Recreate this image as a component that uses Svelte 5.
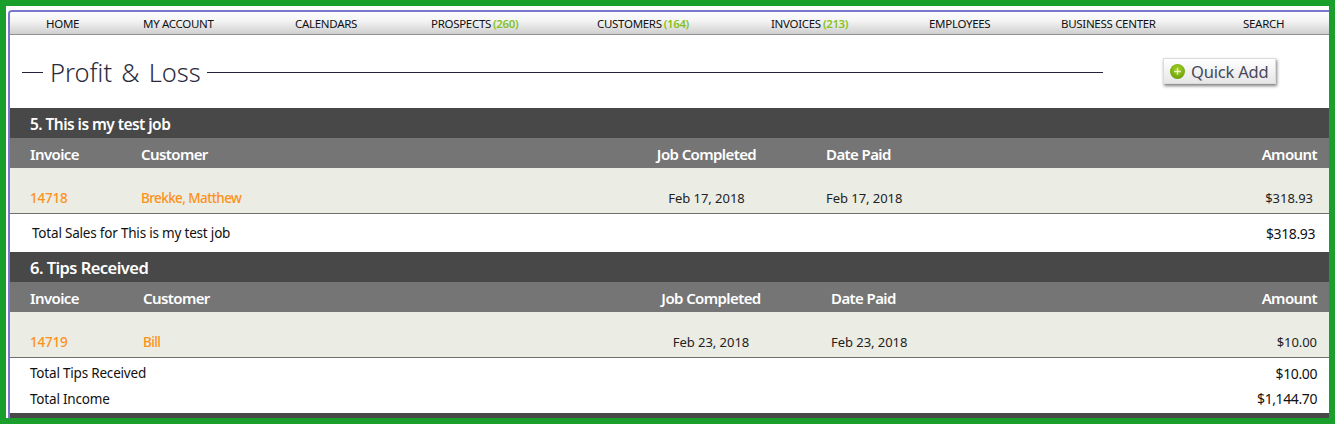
<script>
  const nav = [
    { label: 'HOME' },
    { label: 'MY ACCOUNT' },
    { label: 'CALENDARS' },
    { label: 'PROSPECTS', count: 260 },
    { label: 'CUSTOMERS', count: 164 },
    { label: 'INVOICES', count: 213 },
    { label: 'EMPLOYEES' },
    { label: 'BUSINESS CENTER' },
    { label: 'SEARCH' }
  ];

  const sections = [
    {
      title: '5. This is my test job',
      variant: 'first',
      invoice: '14718',
      customer: 'Brekke, Matthew',
      completed: 'Feb 17, 2018',
      paid: 'Feb 17, 2018',
      amount: '$318.93',
      totals: [{ label: 'Total Sales for This is my test job', value: '$318.93' }]
    },
    {
      title: '6. Tips Received',
      variant: 'second',
      invoice: '14719',
      customer: 'Bill',
      completed: 'Feb 23, 2018',
      paid: 'Feb 23, 2018',
      amount: '$10.00',
      totals: [
        { label: 'Total Tips Received', value: '$10.00' },
        { label: 'Total Income', value: '$1,144.70' }
      ]
    }
  ];
</script>

<div class="frame">
  <div class="panel">
    <nav class="nav">
      {#each nav as item}
        <a href="#top">{item.label}{#if item.count}<b>({item.count})</b>{/if}</a>
      {/each}
    </nav>

    <header class="title-row">
      <span class="rule short"></span>
      <h1>Profit &amp; Loss</h1>
      <span class="rule long"></span>
      <button class="quick-add" type="button">
        <svg width="15" height="15" viewBox="0 0 15 15" aria-hidden="true">
          <defs>
            <radialGradient id="ball" cx="50%" cy="35%" r="65%">
              <stop offset="0" stop-color="#a4d42a" />
              <stop offset="1" stop-color="#6c9e08" />
            </radialGradient>
          </defs>
          <circle cx="7.5" cy="7.5" r="7.5" fill="url(#ball)" />
          <path d="M7.5 4.2v6.6M4.2 7.5h6.6" stroke="#eef7d2" stroke-width="1.3" />
        </svg>
        Quick Add
      </button>
    </header>

    {#each sections as section}
      <section class={section.variant}>
        <h2>{section.title}</h2>
        <div class="grid head">
          <span>Invoice</span>
          <span>Customer</span>
          <span class="center">Job Completed</span>
          <span>Date Paid</span>
          <span class="right">Amount</span>
        </div>
        <div class="grid row">
          <a href="#top">{section.invoice}</a>
          <a href="#top" class="customer">{section.customer}</a>
          <span class="center">{section.completed}</span>
          <span>{section.paid}</span>
          <span class="right amount">{section.amount}</span>
        </div>
        <div class="totals">
          {#each section.totals as total}
            <div class="total">
              <span>{total.label}</span>
              <span class="value">{total.value}</span>
            </div>
          {/each}
        </div>
      </section>
    {/each}
    <div class="end-bar"></div>
  </div>
</div>

<style>
  :global(body) {
    font-family: "Noto Sans", "Open Sans", sans-serif;
    background: #fff;
  }

  .frame {
    box-sizing: border-box;
    height: 424px;
    border: 6px solid #1a9f2d;
    padding: 4px 0 0 2px;
    background: #fff;
    overflow: hidden;
  }

  .panel {
    height: 100%;
    border-top: 2px solid #7a78cc;
    border-left: 2px solid #7a78cc;
    border-top-left-radius: 4px;
    overflow: hidden;
    display: flex;
    flex-direction: column;
  }

  .nav {
    flex: none;
    box-sizing: border-box;
    height: 23px;
    display: grid;
    grid-template-columns: 97px 152px 136px 166px 174px 158px 132px 182px 1fr;
    align-items: center;
    padding-left: 36px;
    background: linear-gradient(#fdfdfd, #f4f4f4 40%, #cfcfcf);
    border-bottom: 1px solid #909090;
  }

  .nav a {
    font-size: 11.5px;
    letter-spacing: -0.3px;
    color: #111;
    text-decoration: none;
    white-space: nowrap;
  }

  .nav b {
    margin-left: 2px;
    color: #86c21a;
    font-weight: 600;
    letter-spacing: -0.4px;
  }

  .title-row {
    flex: none;
    height: 73px;
    display: flex;
    align-items: center;
    padding: 1px 0 0 12px;
    box-sizing: border-box;
  }

  .rule {
    height: 1px;
    background: #22223a;
  }

  .rule.short {
    width: 21px;
  }

  .rule.long {
    width: 896px;
  }

  h1 {
    margin: 0 5px 0 7px;
    width: 152px;
    font-size: 25.5px;
    font-weight: 300;
    word-spacing: 2.5px;
    color: #2b2b3c;
    white-space: nowrap;
  }

  .quick-add {
    margin: 0 0 2px 60px;
    width: 113px;
    height: 26px;
    display: flex;
    align-items: center;
    gap: 6px;
    padding: 0 0 0 6px;
    border: 1px solid #dcdcdc;
    background: linear-gradient(#fff, #e6e6e6);
    box-shadow: 1px 2px 3px rgba(0, 0, 0, 0.5);
    font-family: inherit;
    font-size: 16.5px;
    letter-spacing: -0.2px;
    color: #47475a;
    white-space: nowrap;
  }

  h2 {
    margin: 0;
    height: 30px;
    line-height: 33px;
    padding-left: 20px;
    background: #484848;
    color: #fff;
    font-size: 15.5px;
    font-weight: 600;
    letter-spacing: -0.55px;
  }

  .second h2 {
    font-size: 16.5px;
    line-height: 32px;
  }

  .grid {
    display: grid;
    padding: 0 12px 0 20px;
  }

  .first .grid {
    grid-template-columns: 111px 446px 239px 100px 1fr;
  }

  .second .grid {
    grid-template-columns: 113px 448px 240px 100px 1fr;
  }

  .head {
    box-sizing: border-box;
    height: 30px;
    padding-top: 1px !important;
    align-items: center;
    background: #757575;
    color: #fff;
    font-size: 15px;
    font-weight: 600;
    letter-spacing: -0.6px;
    white-space: nowrap;
  }

  .row {
    box-sizing: border-box;
    height: 46px;
    padding-top: 21px !important;
    background: #ebece4;
    border-bottom: 1px solid #6e6e6e;
    color: #222;
    font-size: 13px;
    letter-spacing: -0.05px;
    white-space: nowrap;
  }

  .row a {
    color: #fd9119;
    font-size: 13.5px;
    font-weight: 500;
    letter-spacing: -0.2px;
    text-decoration: none;
  }

  .row a.customer {
    letter-spacing: -0.6px;
  }

  .center {
    justify-self: center;
  }

  .right {
    justify-self: end;
  }

  .first .amount {
    margin-right: 4px;
  }

  .totals {
    height: 55px;
    background: #fff;
    color: #111;
    font-size: 13.5px;
    letter-spacing: -0.2px;
  }

  .first .totals {
    height: 38px;
  }

  .total {
    box-sizing: border-box;
    height: 21px;
    display: flex;
    justify-content: space-between;
    align-items: center;
    padding: 0 12px 0 20px;
  }

  .first .total {
    height: 38px;
    padding: 0 14px 0 22px;
  }

  .second .total:first-child {
    height: 30px;
  }

  .value {
    font-size: 14px;
    letter-spacing: -0.4px;
  }

  .end-bar {
    flex: 1;
    background: #484848;
  }
</style>
